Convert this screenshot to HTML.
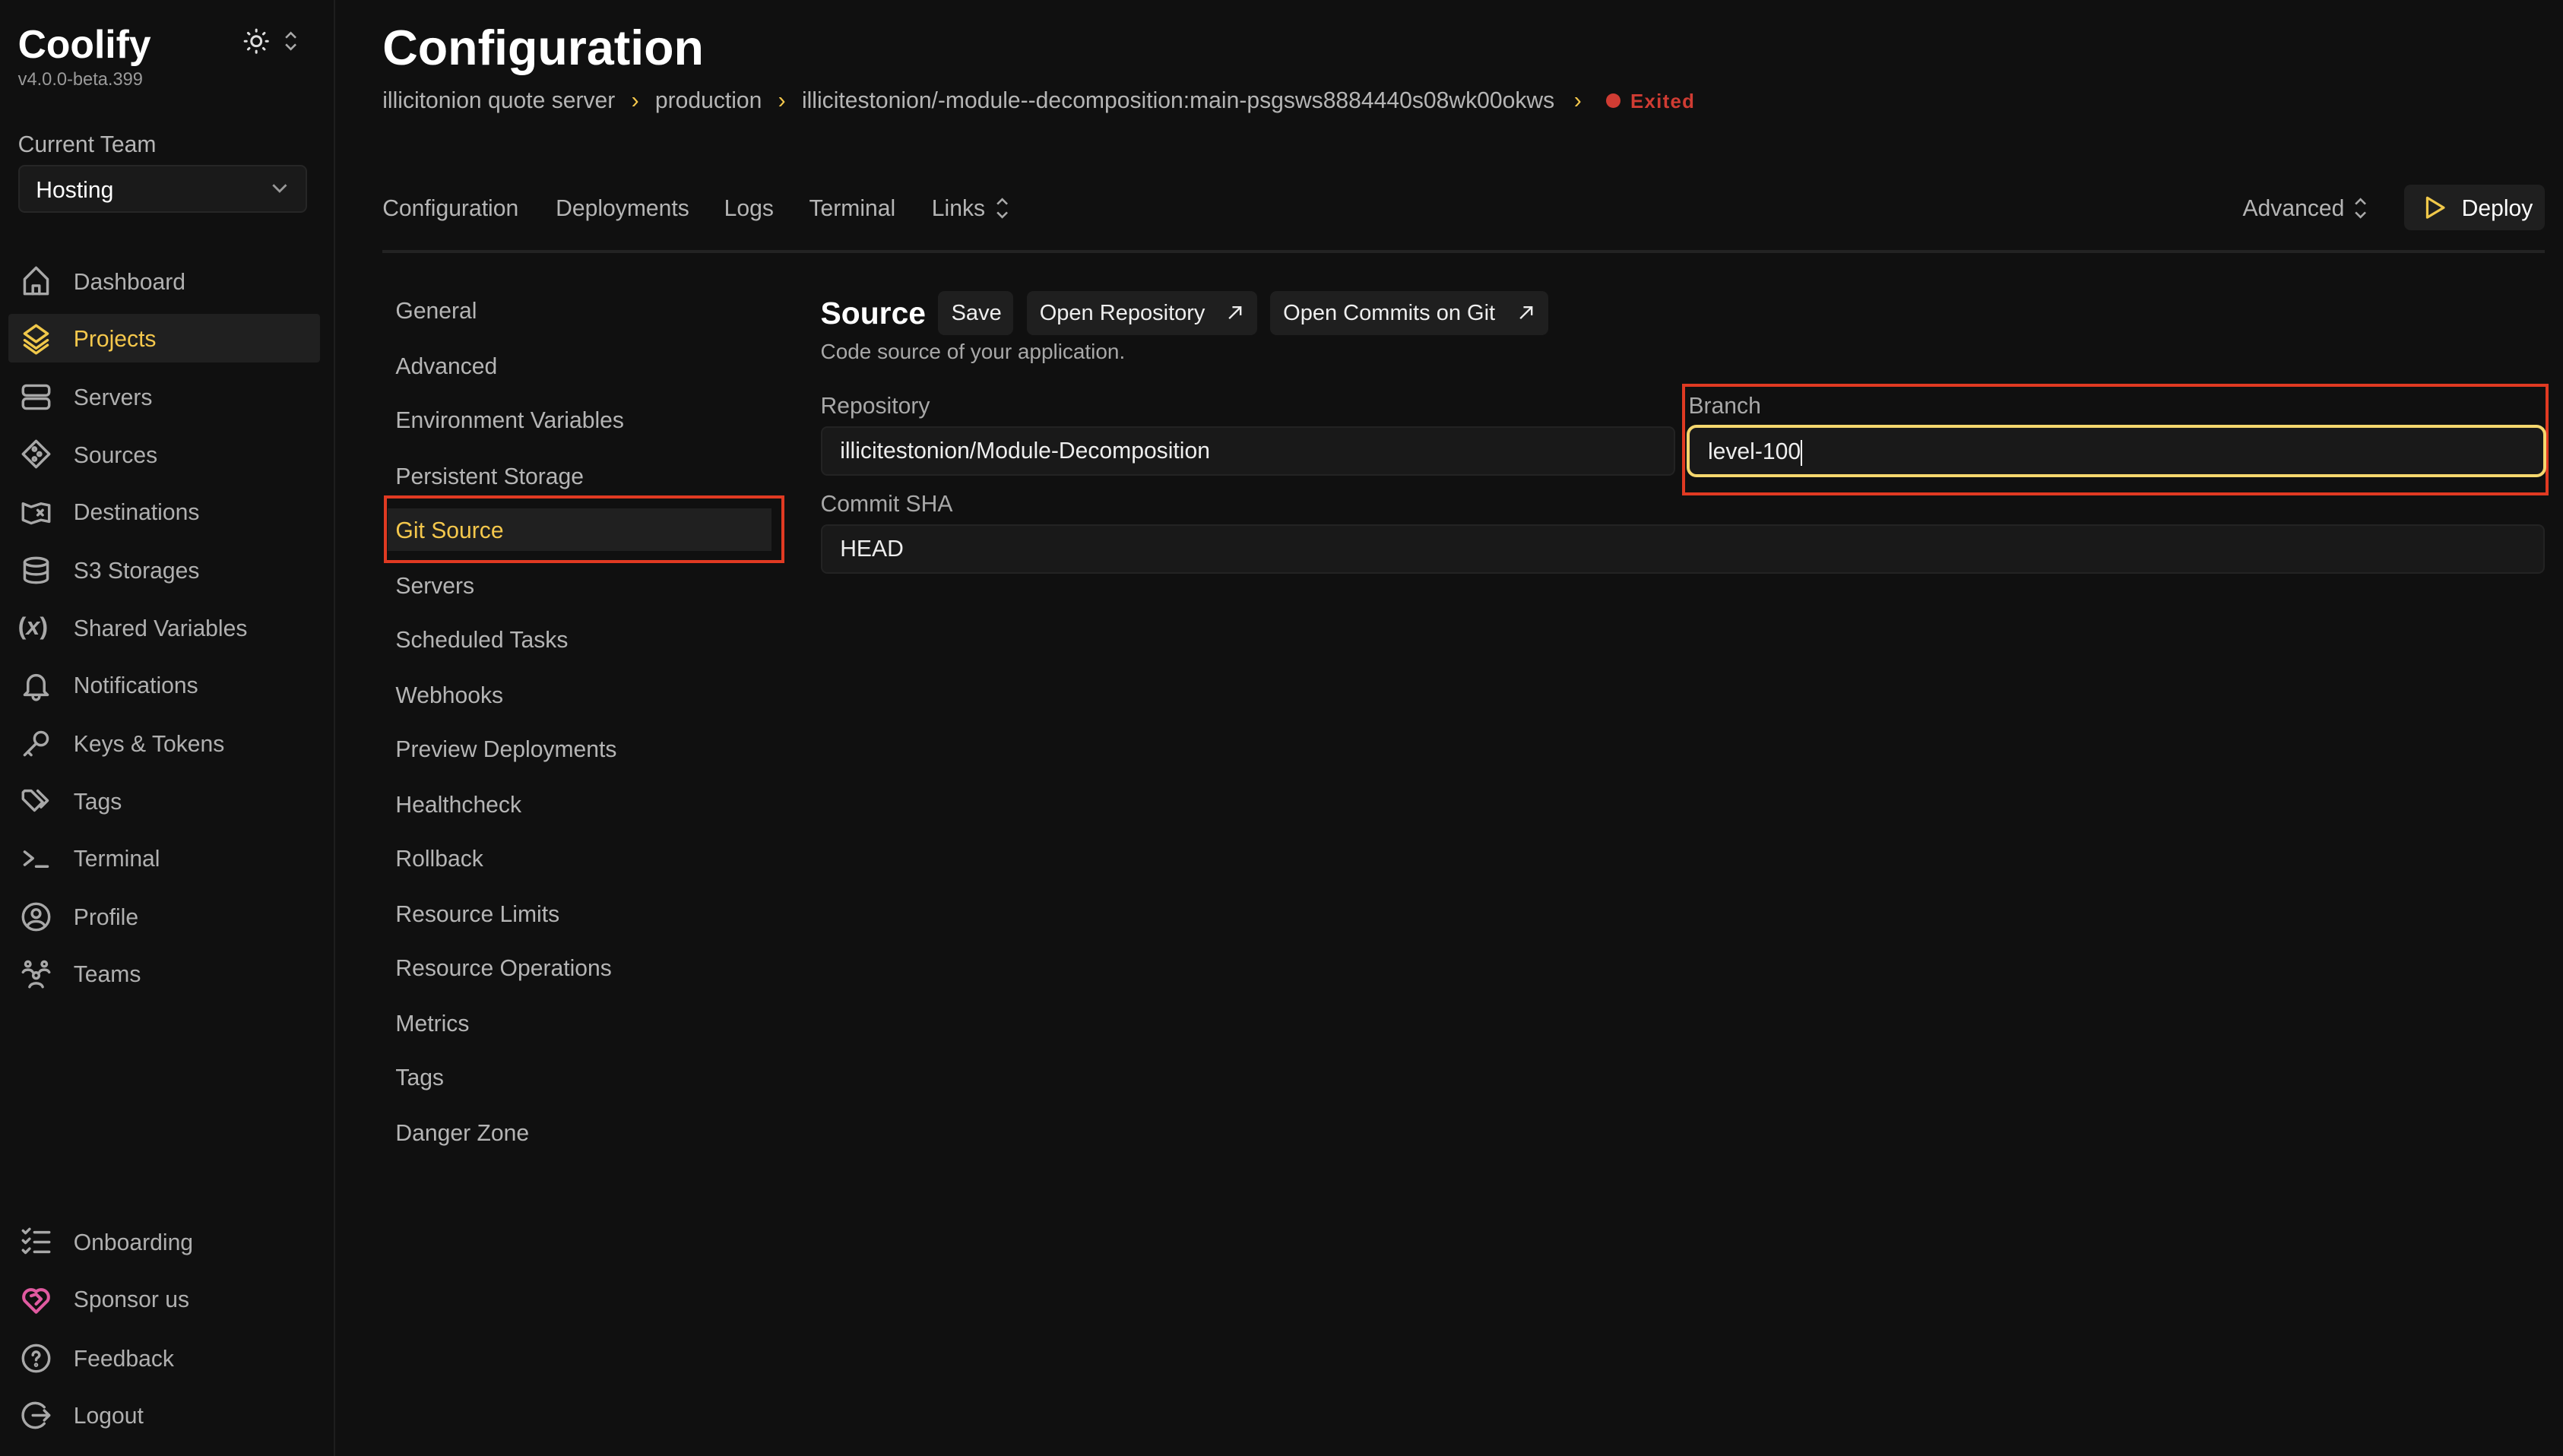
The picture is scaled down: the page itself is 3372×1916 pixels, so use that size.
<!DOCTYPE html>
<html><head><meta charset="utf-8">
<style>
html,body{margin:0;padding:0;background:#101010;width:3372px;height:1916px;overflow:hidden}
#w{zoom:2.1505;width:1568px;height:891px;position:relative;font-family:"Liberation Sans",sans-serif;color:#d4d4d4}
.a{position:absolute;white-space:nowrap}
.side{position:absolute;left:0;top:0;width:204px;height:891px;border-right:1px solid #1e1e1e;background:#101010}
.nav{position:absolute;left:45px;font-size:14px;color:#b0b0b0;line-height:18px;margin-top:1px}
.ic{position:absolute;left:12px;width:20px;height:20px}
.ic svg{width:20px;height:20px;fill:none;stroke:#a8a8a8;stroke-width:1.6;stroke-linecap:round;stroke-linejoin:round}
.sub{position:absolute;left:242px;font-size:14px;color:#b5b5b5;line-height:18px;margin-top:1px}
.tab{position:absolute;top:119px;font-size:14px;color:#b5b5b5;line-height:18px}
.btn{position:absolute;top:178px;height:27px;background:#1f1f1f;border-radius:4px;font-size:13.5px;color:#eee;line-height:27px;padding:0 8px;box-sizing:border-box;white-space:nowrap}
.btn svg{position:absolute;right:9px;top:9px}
.inp{position:absolute;background:#191919;border:1px solid #232323;border-radius:4px;box-sizing:border-box;font-size:14px;color:#eee;padding-left:11px}
.lbl{position:absolute;font-size:14px;color:#a8a8a8;line-height:18px}
</style></head><body><div id="w">
<div class="side">
<div class="a" style="left:11px;top:13px;font-size:24px;font-weight:bold;color:#fff">Coolify</div>
<div class="a" style="left:11px;top:43px;font-size:11px;color:#9a9a9a">v4.0.0-beta.399</div>
<svg class="a" style="left:149px;top:17px" width="16" height="16" viewBox="0 0 16 16" fill="none" stroke="#ddd" stroke-width="1.4" stroke-linecap="round"><circle cx="8" cy="8" r="3"/><path d="M8 1v1M8 14v1M1 8h1M14 8h1M3 3l.7.7M12.3 12.3l.7.7M3 13l.7-.7M12.3 3.7l.7-.7"/></svg>
<svg class="a" style="left:174px;top:18px" width="8" height="14" viewBox="0 0 8 14" fill="none" stroke="#aaa" stroke-width="1.2"><path d="M1 5l3-3 3 3M1 9l3 3 3-3"/></svg>
<div class="a" style="left:11px;top:81px;font-size:14px;color:#b5b5b5">Current Team</div>
<div class="a" style="left:11px;top:101px;width:177px;height:29px;background:#1a1a1a;border:1px solid #262626;border-radius:4px;box-sizing:border-box"></div>
<div class="a" style="left:22px;top:109px;font-size:14px;color:#fff">Hosting</div>
<svg class="a" style="left:165px;top:111px" width="12" height="9" viewBox="0 0 12 9" fill="none" stroke="#999" stroke-width="1.3"><path d="M2 2l4 4 4-4"/></svg>
<div class="a" style="left:5px;top:192px;width:191px;height:30px;background:#202020;border-radius:2px"></div>

<div class="ic" style="top:162px"><svg viewBox="0 0 20 20"><path d="M3 9l7-7 7 7v9H3z"/><path d="M8 18v-5h4v5"/></svg></div><div class="nav" style="top:163px">Dashboard</div>
<div class="ic" style="top:197px"><svg viewBox="0 0 20 20" style="stroke:#f0c84a"><path d="M10 2l7 5-7 5-7-5z"/><path d="M3 11l7 5 7-5"/><path d="M3 14l7 5 7-5"/></svg></div><div class="nav" style="top:198px;color:#f5c84c">Projects</div>
<div class="ic" style="top:233px"><svg viewBox="0 0 20 20"><rect x="2" y="3" width="16" height="6" rx="2"/><rect x="2" y="11" width="16" height="6" rx="2"/></svg></div><div class="nav" style="top:234px">Servers</div>
<div class="ic" style="top:268px"><svg viewBox="0 0 20 20"><path d="M10 2l8 8-8 8-8-8z"/><circle cx="9" cy="7" r="1"/><circle cx="9" cy="13" r="1"/><circle cx="12" cy="10" r="1"/></svg></div><div class="nav" style="top:269px">Sources</div>
<div class="ic" style="top:303px"><svg viewBox="0 0 20 20"><path d="M2 5l5 2 6-2 5 1v10l-5-1-6 2-5-2z"/><path d="M11 9l3 3M14 9l-3 3"/></svg></div><div class="nav" style="top:304px">Destinations</div>
<div class="ic" style="top:339px"><svg viewBox="0 0 20 20"><ellipse cx="10" cy="5" rx="7" ry="2.5"/><path d="M3 5v10c0 1.4 3 2.5 7 2.5s7-1.1 7-2.5V5M3 10c0 1.4 3 2.5 7 2.5s7-1.1 7-2.5"/></svg></div><div class="nav" style="top:340px">S3 Storages</div>
<div class="a" style="left:11px;top:375px;font-size:15px;font-weight:bold;color:#a8a8a8">(<i>x</i>)</div><div class="nav" style="top:375px">Shared Variables</div>
<div class="ic" style="top:409px"><svg viewBox="0 0 20 20"><path d="M5 14V9a5 5 0 0110 0v5l2 2H3z"/><path d="M8 17a2 2 0 004 0"/></svg></div><div class="nav" style="top:410px">Notifications</div>
<div class="ic" style="top:445px"><svg viewBox="0 0 20 20"><circle cx="13" cy="7" r="4"/><path d="M10 10l-7 7M5 15l2 2"/></svg></div><div class="nav" style="top:446px">Keys &amp; Tokens</div>
<div class="ic" style="top:480px"><svg viewBox="0 0 20 20"><path d="M2 5v4l7 7 5-5-7-7H3z"/><path d="M11 4l6 6-4 4"/></svg></div><div class="nav" style="top:481px">Tags</div>
<div class="ic" style="top:515px"><svg viewBox="0 0 20 20"><path d="M3 6l5 4-5 4M10 15h7"/></svg></div><div class="nav" style="top:516px">Terminal</div>
<div class="ic" style="top:551px"><svg viewBox="0 0 20 20"><circle cx="10" cy="10" r="8"/><circle cx="10" cy="8" r="2.5"/><path d="M5 15c2-3 8-3 10 0"/></svg></div><div class="nav" style="top:552px">Profile</div>
<div class="ic" style="top:586px"><svg viewBox="0 0 20 20"><circle cx="5" cy="4" r="1.5"/><circle cx="15" cy="4" r="1.5"/><circle cx="10" cy="11" r="1.8"/><path d="M2 9c1-2 5-2 6 0M12 9c1-2 5-2 6 0M6 18c1-3 7-3 8 0"/></svg></div><div class="nav" style="top:587px">Teams</div>

<div class="ic" style="top:750px"><svg viewBox="0 0 20 20"><path d="M2 3l1.5 1.5L6 2M2 9l1.5 1.5L6 8M2 15l1.5 1.5L6 14M9 4h9M9 10h9M9 16h9"/></svg></div><div class="nav" style="top:751px">Onboarding</div>
<div class="ic" style="top:785px"><svg viewBox="0 0 20 20" style="stroke:#e05aa0;stroke-width:1.9"><path d="M10 18L3 11a4.5 4.5 0 017-5.5A4.5 4.5 0 0117 11z"/><path d="M7 8l3-1 3 3-3 3"/></svg></div><div class="nav" style="top:786px">Sponsor us</div>
<div class="ic" style="top:821px"><svg viewBox="0 0 20 20"><circle cx="10" cy="10" r="8"/><path d="M8 8a2 2 0 114 0c0 1.5-2 1.5-2 3"/><circle cx="10" cy="14" r=".5"/></svg></div><div class="nav" style="top:822px">Feedback</div>
<div class="ic" style="top:856px"><svg viewBox="0 0 20 20"><path d="M15 5a7.5 7.5 0 100 10"/><path d="M8 10h10M15 7l3 3-3 3"/></svg></div><div class="nav" style="top:857px">Logout</div>
</div>

<div class="a" style="left:234px;top:12px;font-size:30px;font-weight:bold;color:#fff">Configuration</div>
<div class="a" style="left:234px;top:54px;font-size:14px;color:#b5b5b5">illicitonion quote server <span style="color:#f5c84c;margin:0 6px">›</span> production <span style="color:#f5c84c;margin:0 6px">›</span> illicitestonion/-module--decomposition:main-psgsws8884440s08wk00okws <span style="color:#f5c84c;margin:0 8px">›</span> <span style="display:inline-block;width:9px;height:9px;border-radius:50%;background:#d03c33;margin:0 6px 0 3px"></span><b style="color:#d03c33;font-size:12px;letter-spacing:.6px">Exited</b></div>

<div class="tab" style="left:234px">Configuration</div>
<div class="tab" style="left:340px">Deployments</div>
<div class="tab" style="left:443px">Logs</div>
<div class="tab" style="left:495px">Terminal</div>
<div class="tab" style="left:570px">Links</div>
<div class="tab" style="left:1372px">Advanced</div>
<svg class="a" style="left:1440px;top:121px" width="8" height="13" viewBox="0 0 8 13" fill="none" stroke="#aaa" stroke-width="1.2"><path d="M1 4l3-3 3 3M1 9l3 3 3-3"/></svg>
<svg class="a" style="left:609px;top:121px" width="8" height="13" viewBox="0 0 8 13" fill="none" stroke="#aaa" stroke-width="1.2"><path d="M1 4l3-3 3 3M1 9l3 3 3-3"/></svg>
<div class="a" style="left:1471px;top:113px;width:86px;height:28px;background:#1f1f1f;border-radius:4px"></div>
<svg class="a" style="left:1482px;top:119px" width="16" height="16" viewBox="0 0 16 16" fill="none" stroke="#f0c84a" stroke-width="1.5" stroke-linejoin="round"><path d="M3 2v12l10-6z"/></svg>
<div class="a" style="left:1506px;top:119px;font-size:14px;color:#fff;line-height:18px">Deploy</div>
<div class="a" style="left:234px;top:153px;width:1323px;height:2px;background:#232323"></div>

<div class="sub" style="top:181px">General</div>
<div class="sub" style="top:215px">Advanced</div>
<div class="sub" style="top:248px">Environment Variables</div>
<div class="sub" style="top:282px">Persistent Storage</div>
<div class="a" style="left:237px;top:311px;width:235px;height:26px;background:#202020"></div>
<div class="a" style="left:235px;top:303px;width:241px;height:38px;border:2px solid #e03a22"></div>
<div class="sub" style="top:315px;color:#f5c84c">Git Source</div>
<div class="sub" style="top:349px">Servers</div>
<div class="sub" style="top:382px">Scheduled Tasks</div>
<div class="sub" style="top:416px">Webhooks</div>
<div class="sub" style="top:449px">Preview Deployments</div>
<div class="sub" style="top:483px">Healthcheck</div>
<div class="sub" style="top:516px">Rollback</div>
<div class="sub" style="top:550px">Resource Limits</div>
<div class="sub" style="top:583px">Resource Operations</div>
<div class="sub" style="top:617px">Metrics</div>
<div class="sub" style="top:650px">Tags</div>
<div class="sub" style="top:684px">Danger Zone</div>

<div class="a" style="left:502px;top:181px;font-size:19px;font-weight:bold;color:#fff">Source</div>
<div class="btn" style="left:574px;width:46px">Save</div>
<div class="btn" style="left:628px;width:141px">Open Repository<svg width="9" height="9" viewBox="0 0 9 9" fill="none" stroke="#eee" stroke-width="1.1"><path d="M1 8l7-7M3 1h5v5"/></svg></div>
<div class="btn" style="left:777px;width:170px">Open Commits on Git<svg width="9" height="9" viewBox="0 0 9 9" fill="none" stroke="#eee" stroke-width="1.1"><path d="M1 8l7-7M3 1h5v5"/></svg></div>
<div class="a" style="left:502px;top:208px;font-size:13px;color:#a8a8a8">Code source of your application.</div>

<div class="lbl" style="left:502px;top:240px">Repository</div>
<div class="inp" style="left:502px;top:261px;width:523px;height:30px;line-height:29px">illicitestonion/Module-Decomposition</div>
<div class="a" style="left:1029px;top:235px;width:530px;height:68px;border:2px solid #e03a22;box-sizing:border-box"></div>
<div class="lbl" style="left:1033px;top:240px">Branch</div>
<div class="inp" style="left:1032px;top:260px;width:526px;height:32px;line-height:30px;border:2px solid #f5d76e;border-radius:6px">level-100<span style="display:inline-block;width:1px;height:16px;background:#fff;vertical-align:middle"></span></div>
<div class="lbl" style="left:502px;top:300px">Commit SHA</div>
<div class="inp" style="left:502px;top:321px;width:1055px;height:30px;line-height:29px">HEAD</div>
</div></body></html>
